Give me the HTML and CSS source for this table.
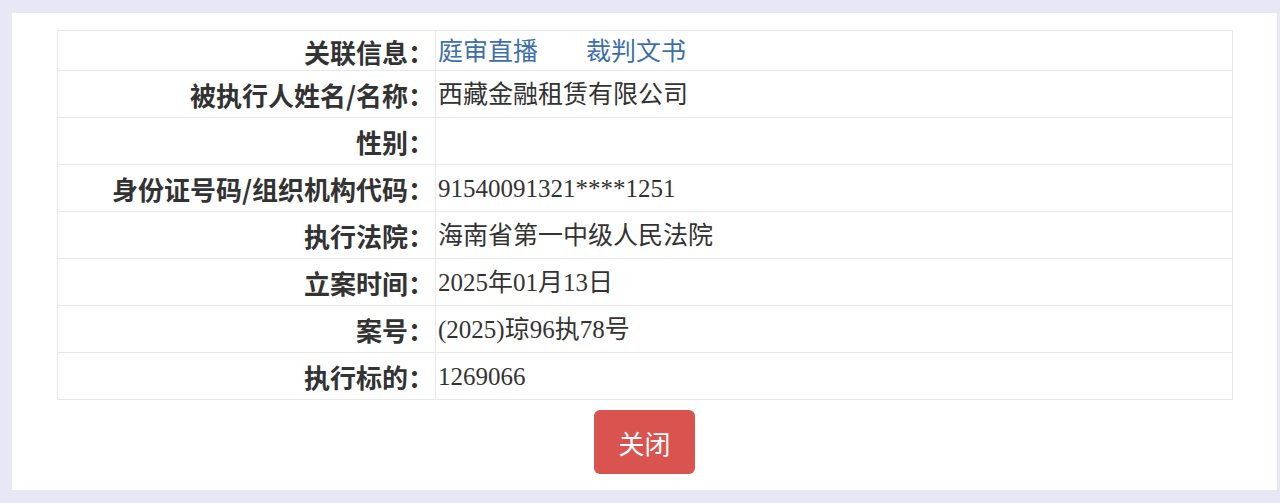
FILE: index.html
```html
<!DOCTYPE html>
<html lang="zh-CN">

<head>
    <meta charset="UTF-8">
    <meta name="viewport" content="width=device-width, initial-scale=1.0">
    <title>被执行人详情</title>
    <link rel="stylesheet" href="styles.css">
</head>

<body>

    <!-- Detail panel -->
    <div class="panel">
        <table class="detail">
            <tr class="first">
                <th>关联信息：</th>
                <td><a href="#">庭审直播</a><a href="#">裁判文书</a></td>
            </tr>
            <tr>
                <th>被执行人姓名/名称：</th>
                <td>西藏金融租赁有限公司</td>
            </tr>
            <tr>
                <th>性别：</th>
                <td></td>
            </tr>
            <tr>
                <th>身份证号码/组织机构代码：</th>
                <td>91540091321****1251</td>
            </tr>
            <tr>
                <th>执行法院：</th>
                <td>海南省第一中级人民法院</td>
            </tr>
            <tr>
                <th>立案时间：</th>
                <td>2025年01月13日</td>
            </tr>
            <tr>
                <th>案号：</th>
                <td>(2025)琼96执78号</td>
            </tr>
            <tr>
                <th>执行标的：</th>
                <td>1269066</td>
            </tr>
        </table>

        <div class="actions">
            <button class="close">关闭</button>
        </div>
    </div>

</body>

</html>
```

FILE: styles.css
```css
html {
    background: #e7e7f6;
}

body {
    margin: 0;
    padding: 13px 3px 13px 12px;
    font-family: "Liberation Serif", "Noto Sans CJK SC", serif;
    font-size: 25px;
    color: #333;
}

.panel {
    background: #fff;
    padding: 17px 44px 16px 45px;
}

.detail {
    width: 100%;
    border-collapse: collapse;
    border: 1px solid #e8e8e8;
}

.detail tr {
    height: 47px;
}

.detail tr.first {
    height: 40px;
}

.detail th,
.detail td {
    border: 1px solid #e8e8e8;
    padding: 2px 2px 0;
    vertical-align: middle;
    line-height: 1.2;
}

.detail th {
    width: 374px;
    text-align: right;
    font-family: "Noto Sans CJK SC", sans-serif;
    font-size: 26px;
    font-weight: 600;
    padding-right: 1px;
}

.detail td {
    text-align: left;
}

.detail a {
    color: #3d70a9;
    text-decoration: none;
    margin-right: 48px;
}

.actions {
    display: flex;
    justify-content: center;
    padding-top: 10px;
}

.close {
    width: 101px;
    height: 64px;
    margin-left: -1px;
    border: none;
    border-radius: 6px;
    background: #d9534f;
    color: #fff;
    font-family: "Noto Sans CJK SC", sans-serif;
    font-size: 26px;
    cursor: pointer;
}
```
